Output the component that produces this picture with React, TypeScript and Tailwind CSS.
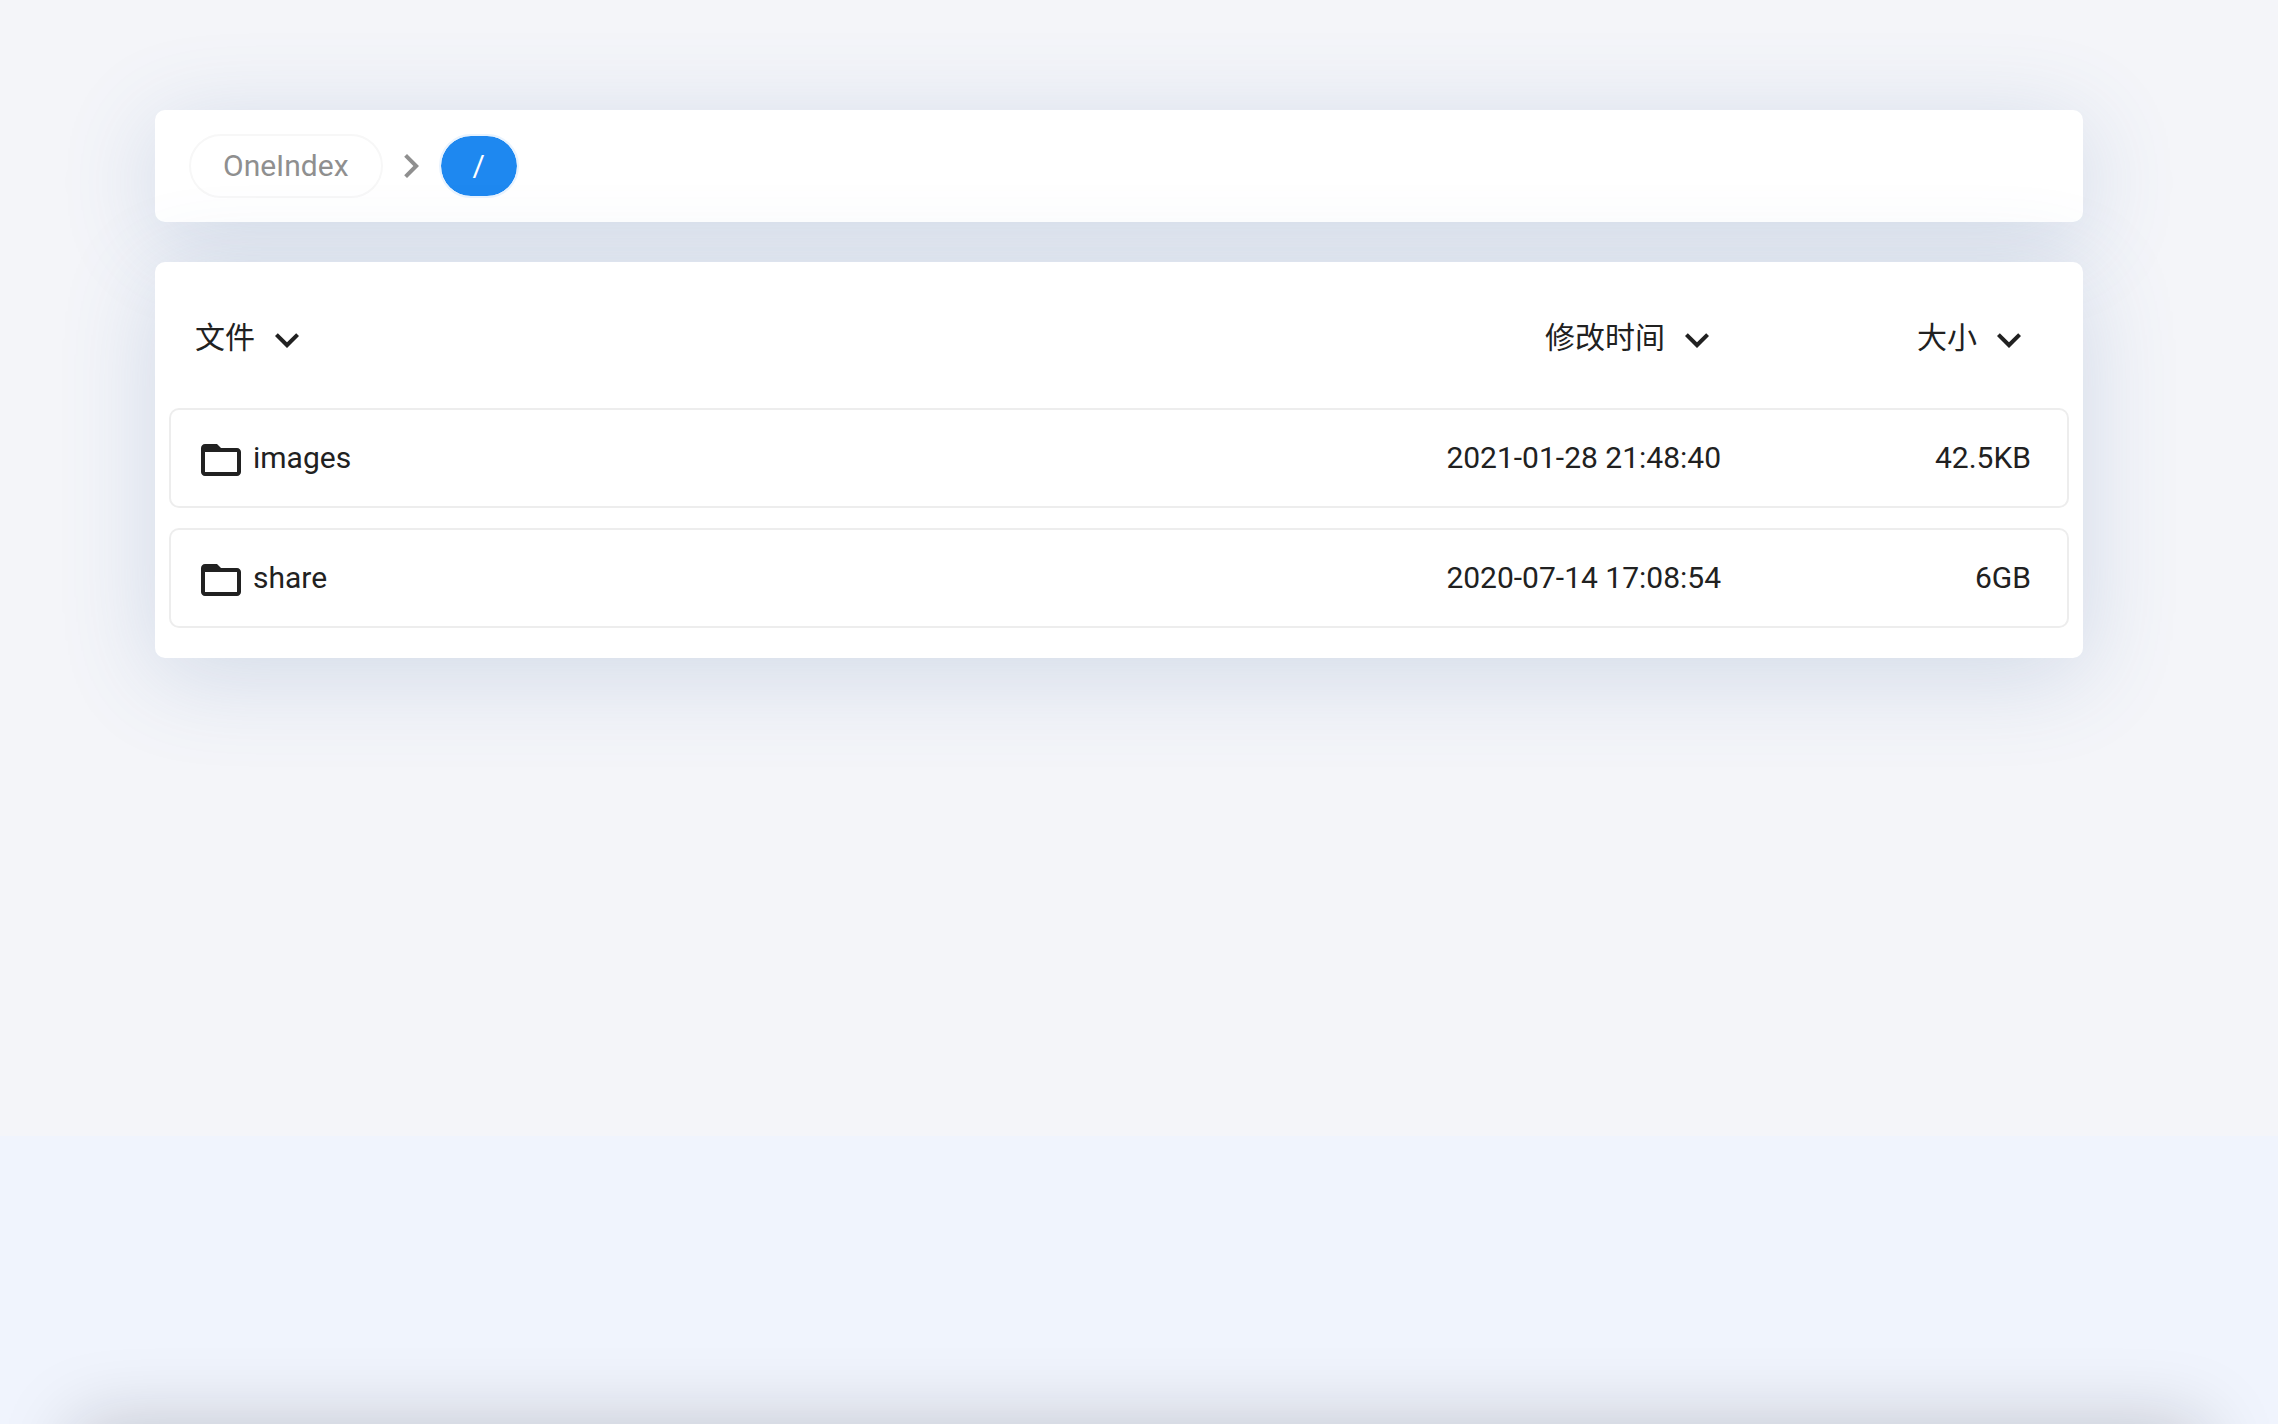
const CHEVRON_DOWN = "M7.41 8.59 12 13.17l4.59-4.58L18 10l-6 6-6-6z";
const CHEVRON_RIGHT = "M8.59 16.59 13.17 12 8.59 7.41 10 6l6 6-6 6z";
const FOLDER =
  "M20 6h-8l-2-2H4c-1.1 0-1.99.9-1.99 2L2 18c0 1.1.9 2 2 2h16c1.1 0 2-.9 2-2V8c0-1.1-.9-2-2-2zm0 12H4V8h16v10z";

function Icon({ path, className = "" }: { path: string; className?: string }) {
  return (
    <svg viewBox="0 0 24 24" fill="currentColor" aria-hidden="true" className={`size-12 shrink-0 ${className}`}>
      <path d={path} />
    </svg>
  );
}

function SortButton({ label }: { label: string }) {
  return (
    <button type="button" className="inline-flex cursor-pointer items-center gap-2 align-middle">
      <span>{label}</span>
      <Icon path={CHEVRON_DOWN} className="mt-1" />
    </button>
  );
}

const entries = [
  { name: "images", modified: "2021-01-28 21:48:40", size: "42.5KB" },
  { name: "share", modified: "2020-07-14 17:08:54", size: "6GB" },
];

export default function App() {
  return (
    <div className="relative flex min-h-screen flex-col overflow-hidden bg-[#f4f5f9] font-['Roboto','Noto_Sans_CJK_SC',sans-serif] text-[30px] leading-10 text-[#212121]">
      <main className="flex w-full grow flex-col gap-10 pt-[110px] pr-[195px] pl-[155px]">
        <nav
          aria-label="Breadcrumb"
          className="flex h-28 items-center gap-1 rounded-[10px] bg-white px-[34px] shadow-[0_16px_96px_rgba(70,110,165,0.2)]"
        >
          <a href="#home" className="rounded-full border-2 border-[#f7f7f7] px-8 py-[10px] text-[#8f8f8f]">
            OneIndex
          </a>
          <Icon path={CHEVRON_RIGHT} className="text-[#8f8f8f]" />
          <a
            href="#root"
            aria-current="page"
            className="rounded-full border-2 border-[#e9f3fe] bg-[#1e88f0] bg-clip-padding px-8 py-[10px] text-white"
          >
            /
          </a>
        </nav>

        <section className="rounded-[10px] bg-white px-[14px] pb-[10px] shadow-[0_16px_96px_rgba(70,110,165,0.2)]">
          <table className="w-full border-separate border-spacing-x-0 border-spacing-y-5">
            <thead>
              <tr className="h-[106px]">
                <th scope="col" className="pt-1.5 pl-[26px] text-left font-normal">
                  <SortButton label="文件" />
                </th>
                <th scope="col" className="pt-1.5 text-right font-normal">
                  <SortButton label="修改时间" />
                </th>
                <th scope="col" className="w-[348px] pt-1.5 pr-9 text-right font-normal">
                  <SortButton label="大小" />
                </th>
              </tr>
            </thead>
            <tbody>
              {entries.map((entry) => (
                <tr key={entry.name} className="h-[100px]">
                  <td className="rounded-l-[10px] border-y-2 border-l-2 border-[#ededed] pl-[26px]">
                    <a href={`#${entry.name}`} className="flex items-center gap-2">
                      <Icon path={FOLDER} className="mt-1" />
                      {entry.name}
                    </a>
                  </td>
                  <td className="border-y-2 border-[#ededed] text-right">{entry.modified}</td>
                  <td className="rounded-r-[10px] border-2 border-l-0 border-[#ededed] pr-9 text-right">
                    {entry.size}
                  </td>
                </tr>
              ))}
            </tbody>
          </table>
        </section>
      </main>

      <footer className="h-72 shrink-0 bg-[#f0f4fd]" />
      <div className="absolute inset-x-[76px] -bottom-24 h-24 shadow-[0_0_76px_rgba(20,20,25,0.21)]" />
    </div>
  );
}
